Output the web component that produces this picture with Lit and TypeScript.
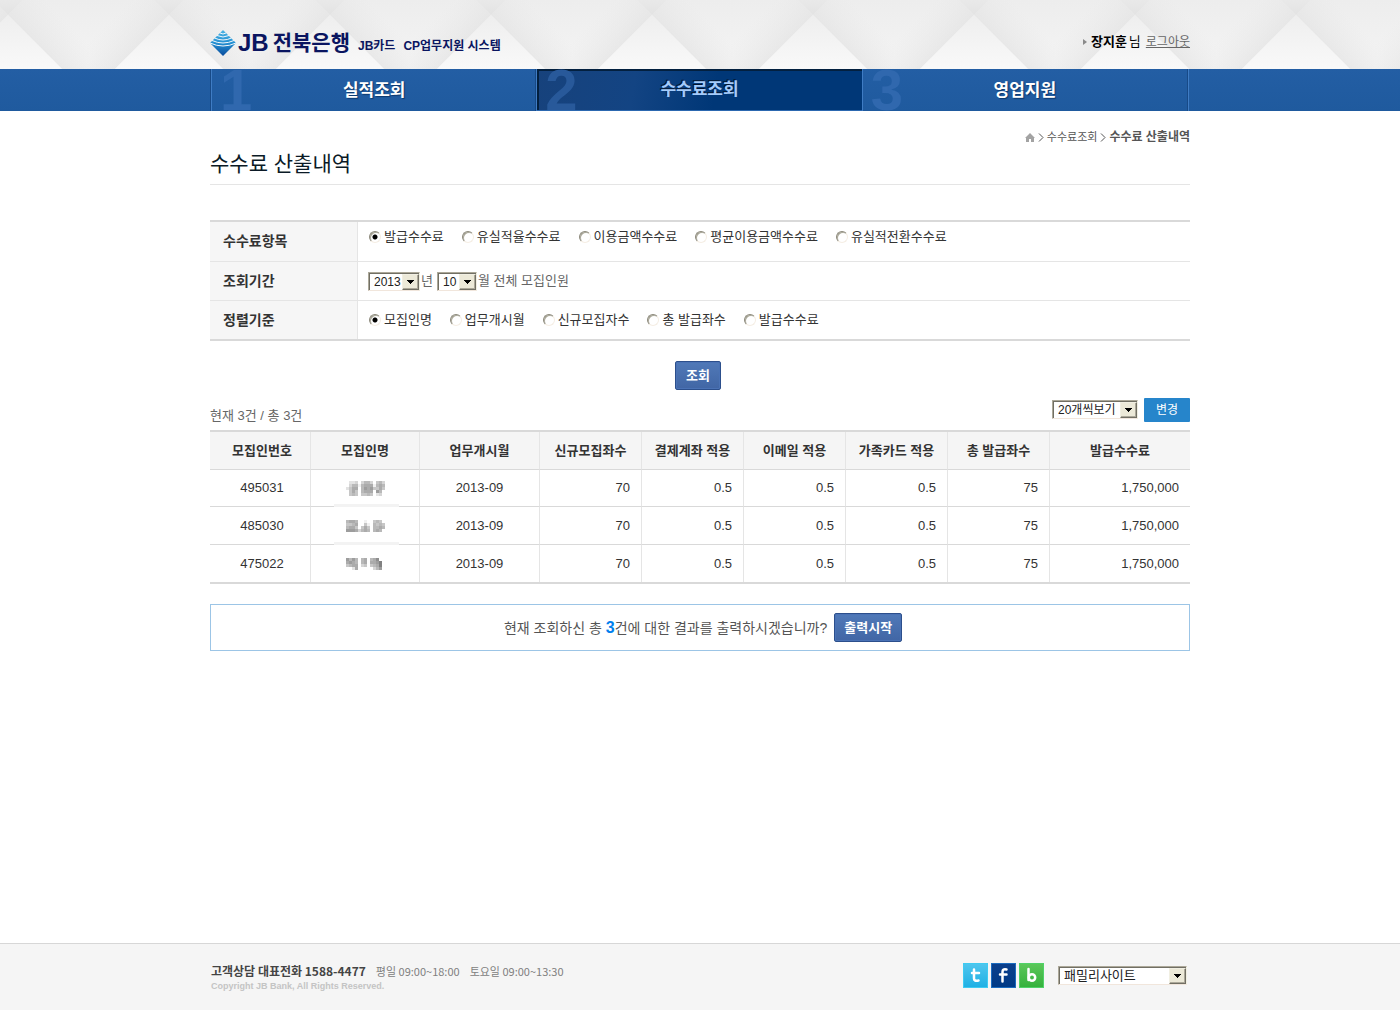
import { LitElement, html, css, svg } from "lit";
import { customElement, property, state } from "lit/decorators.js";
import { classMap } from "lit/directives/class-map.js";

const FONT = css`"Liberation Sans", "Noto Sans CJK KR", sans-serif`;

/** Drop-down with a sunken frame and a raised arrow button. */
@customElement("bevel-select")
class BevelSelect extends LitElement {
  @property() label = "";
  @property({ type: Array }) options: string[] = [];

  static styles = css`
    :host {
      display: inline-grid;
      grid-template: 1fr / 1fr;
      box-sizing: border-box;
      height: 19px;
      background: #fff;
      border: 1px solid #aca899;
      border-right-color: #f1efe2;
      border-bottom-color: #f1e6dc;
      box-shadow: inset 1px 1px 0 #716f64;
      font-size: 12px;
    }
    select {
      grid-area: 1 / 1;
      width: 100%;
      appearance: none;
      border: 0;
      border-radius: 0;
      margin: 0;
      padding: 1px 18px 0 5px;
      background: none;
      color: #222;
      font-family: ${FONT};
      font-size: inherit;
      line-height: 16px;
    }
    .arrow {
      grid-area: 1 / 1;
      justify-self: end;
      display: grid;
      place-items: center;
      width: 17px;
      box-sizing: border-box;
      margin-top: 1px;
      background: #ece9d8;
      border: 1px solid #f1efe2;
      border-right-color: #716f64;
      border-bottom-color: #716f64;
      box-shadow: inset -1px -1px 0 #aca899;
      pointer-events: none;
    }
  `;

  render() {
    return html`
      <select aria-label=${this.label}>
        ${this.options.map((o) => html`<option>${o}</option>`)}
      </select>
      <span class="arrow" aria-hidden="true">
        <svg width="7" height="4" viewBox="0 0 7 4" shape-rendering="crispEdges"><path d="M0 0h7v1H0zM1 1h5v1H1zM2 2h3v1H2zM3 3h1v1H3z" fill="#000" /></svg>
      </span>
    `;
  }
}

/** Bank header with logo, user line and main navigation. */
@customElement("site-header")
class SiteHeader extends LitElement {
  @state() private active = 1;
  private tabs = ["실적조회", "수수료조회", "영업지원"];

  static styles = css`
    :host {
      display: block;
      font-family: ${FONT};
    }
    .top {
      display: grid;
      height: 69px;
      overflow: hidden;
    }
    .pattern {
      grid-area: 1 / 1;
      width: 100%;
      height: 69px;
    }
    .bar {
      grid-area: 1 / 1;
      box-sizing: border-box;
      width: 100%;
      max-width: 980px;
      margin: 0 auto;
      padding-top: 28px;
      display: flex;
      justify-content: space-between;
      align-items: flex-start;
      position: relative;
    }
    .logo {
      display: flex;
      align-items: center;
      color: #0a1560;
      text-decoration: none;
      font-weight: bold;
      line-height: 30px;
      white-space: nowrap;
    }
    .jb {
      font-size: 24px;
      margin: 0 4px 0 2px;
    }
    .bank {
      font-size: 21px;
    }
    .system {
      font-size: 12px;
      line-height: 36px;
      height: 30px;
      margin-left: 8px;
      display: flex;
      gap: 8px;
    }
    .user {
      display: flex;
      align-items: center;
      line-height: 28px;
      font-size: 13px;
      color: #000;
    }
    .user svg {
      margin-right: 4px;
    }
    .user b {
      margin-right: 2px;
    }
    .user a {
      font-size: 12px;
      color: #666;
      margin-left: 5px;
    }
    nav {
      background: linear-gradient(#235ea4, #1f5a9e);
      height: 42px;
    }
    .tabs {
      box-sizing: border-box;
      width: 100%;
      max-width: 980px;
      margin: 0 auto;
      padding: 0 2px 0 1px;
      height: 42px;
      display: flex;
      list-style: none;
    }
    .tabs li {
      flex: 1;
      display: flex;
      border-left: 1px solid #3f7cc4;
      box-shadow: -1px 0 0 #184a87;
    }
    .tabs li:last-child {
      border-right: 1px solid #184a87;
      box-shadow: 1px 0 0 #3f7cc4, -1px 0 0 #184a87;
    }
    .tab {
      flex: 1;
      position: relative;
      text-align: center;
      text-decoration: none;
      color: #fff;
      font-size: 17px;
      font-weight: bold;
      line-height: 43px;
      text-shadow: 1px 1px 1px #0c376c;
    }
    .tab.on {
      line-height: 42px;
      background: linear-gradient(100deg, #17427c 0%, #134483 30%, #003777 55%, #003777 100%);
      border-bottom: 1px solid #2c68b0;
      box-shadow: inset 2px 2px 0 #03203f;
      color: #a3cbfb;
      text-shadow: -1px -1px 0 #04152e;
    }
    .digit {
      position: absolute;
      left: 8px;
      top: 0;
      font-size: 58px;
      line-height: 42px;
      color: #3068ae;
      text-shadow: none;
    }
    .on .digit {
      color: #28599a;
    }
  `;

  private pattern() {
    return html`
      <svg class="pattern" aria-hidden="true">
        <defs>
          <linearGradient id="base" x1="0" y1="0" x2="0" y2="1">
            <stop offset="0" stop-color="#ededed" />
            <stop offset="1" stop-color="#f4f4f4" />
          </linearGradient>
          <linearGradient id="wedge" x1="0" y1="0" x2="0" y2="1">
            <stop offset="0" stop-color="#e9e9e9" />
            <stop offset="1" stop-color="#e3e3e3" />
          </linearGradient>
          <linearGradient id="peak" x1="0" y1="0" x2="0" y2="1">
            <stop offset="0" stop-color="#eeeeee" />
            <stop offset="1" stop-color="#f9f9f9" />
          </linearGradient>
          <linearGradient id="fadeR" gradientUnits="userSpaceOnUse" x1="108" y1="42" x2="134" y2="16">
            <stop offset="0" stop-color="#e0e0e0" stop-opacity="0.55" />
            <stop offset="1" stop-color="#e6e6e6" stop-opacity="0" />
          </linearGradient>
          <linearGradient id="fadeL" gradientUnits="userSpaceOnUse" x1="54" y1="42" x2="28" y2="16">
            <stop offset="0" stop-color="#e0e0e0" stop-opacity="0.55" />
            <stop offset="1" stop-color="#e6e6e6" stop-opacity="0" />
          </linearGradient>
          <pattern id="quilt" width="161" height="69" patternUnits="userSpaceOnUse" x="88">
            <rect width="161" height="69" fill="url(#base)" />
            <path d="M81 15 135 69H161V0H96Z" fill="url(#fadeR)" />
            <path d="M81 15 27 69H0V0H66Z" fill="url(#fadeL)" />
            <path d="M66 0H96L81 15Z" fill="url(#wedge)" />
            <path d="M81 15 135 69H27Z" fill="url(#peak)" />
          </pattern>
        </defs>
        <rect width="100%" height="69" fill="url(#quilt)" />
      </svg>
    `;
  }

  private mark() {
    return html`
      <svg width="26" height="26" viewBox="0 0 26 26" aria-hidden="true">
        <defs>
          <linearGradient id="gem" x1="0" y1="0" x2="0" y2="1">
            <stop offset="0" stop-color="#4db4e4" />
            <stop offset="0.5" stop-color="#2490d2" />
            <stop offset="1" stop-color="#0a4b9c" />
          </linearGradient>
        </defs>
        <path d="M13 0 26 13 13 26 0 13Z" fill="url(#gem)" />
        <g fill="none" stroke="#f4f8fb" stroke-width="1">
          <path d="M10 3Q13 5 16 3" />
          <path d="M7 5.500Q13 8.500 19 5.500" />
          <path d="M4.500 8Q13 12 21.500 8" />
          <path d="M2 10.500Q13 15.500 24 10.500" />
          <path d="M0 13Q13 19 26 13" />
        </g>
      </svg>
    `;
  }

  private pick(e: Event, i: number) {
    e.preventDefault();
    this.active = i;
  }

  render() {
    return html`
      <div class="top">
        ${this.pattern()}
        <div class="bar">
          <a class="logo" href="#">
            ${this.mark()}
            <span class="jb">JB</span><span class="bank">전북은행</span>
            <span class="system"><span>JB카드</span><span>CP업무지원 시스템</span></span>
          </a>
          <div class="user">
            <svg width="4" height="6" viewBox="0 0 4 6" aria-hidden="true"><path d="M0 0 4 3 0 6Z" fill="#8a8a8a" /></svg>
            <b>장지훈</b>님<a href="#">로그아웃</a>
          </div>
        </div>
      </div>
      <nav aria-label="주 메뉴">
        <ul class="tabs">
          ${this.tabs.map(
            (t, i) => html`<li>
              <a href="#" class=${classMap({ tab: true, on: i === this.active })} @click=${(e: Event) => this.pick(e, i)}>
                <span class="digit" aria-hidden="true">${i + 1}</span>${t}
              </a>
            </li>`
          )}
        </ul>
      </nav>
    `;
  }
}

/** Search conditions: fee item, period and sort order. */
@customElement("fee-filter")
class FeeFilter extends LitElement {
  private items = ["발급수수료", "유실적율수수료", "이용금액수수료", "평균이용금액수수료", "유실적전환수수료"];
  private sorts = ["모집인명", "업무개시월", "신규모집자수", "총 발급좌수", "발급수수료"];

  static styles = css`
    :host {
      display: block;
      font: 13px/16px ${FONT};
      color: #333;
    }
    .box {
      border: solid #d9d9d9;
      border-width: 2px 0;
    }
    .row {
      display: grid;
      grid-template-columns: 148px 1fr;
      min-height: 39px;
      box-sizing: border-box;
      border-bottom: 1px solid #e5e5e5;
    }
    .row:first-child {
      min-height: 40px;
    }
    .row:last-child {
      min-height: 38px;
      border-bottom: 0;
    }
    .head {
      display: flex;
      align-items: center;
      padding: 0 0 1px 13px;
      background: #f6f6f6;
      border-right: 1px solid #e5e5e5;
      font-weight: bold;
      font-size: 14px;
    }
    .cell {
      display: flex;
      flex-wrap: wrap;
      align-items: center;
      padding-left: 11px;
      gap: 0 18px;
    }
    .cell.high {
      align-items: flex-start;
      padding-top: 7px;
    }
    .cell.period {
      gap: 0 1px;
      padding-left: 10px;
      color: #666;
    }
    .cell.period .unit {
      margin-right: 3px;
    }
    .year {
      width: 52px;
    }
    .month {
      width: 40px;
    }
    label {
      display: flex;
      align-items: center;
      gap: 3px;
      white-space: nowrap;
    }
    input {
      appearance: none;
      box-sizing: border-box;
      width: 12px;
      height: 12px;
      margin: 0;
      border-radius: 50%;
      border: 1px solid #8b887a;
      border-right-color: #f5eee4;
      border-bottom-color: #f5eee4;
      background: #fff;
      box-shadow: inset 1px 1px 0 #aaa899;
    }
    input:checked {
      background: radial-gradient(circle, #000 2px, #fff 3px);
    }
    .actions {
      display: flex;
      justify-content: center;
      padding: 20px 4px 0 0;
    }
    button {
      height: 29px;
      padding: 0 10px;
      border: 1px solid #2c4f8c;
      border-radius: 2px;
      background: linear-gradient(#5079b8, #4166a5);
      color: #fff;
      font: bold 13px/27px ${FONT};
      box-shadow: inset 0 0 0 1px #4a72b5;
    }
  `;

  private radios(name: string, list: string[]) {
    return list.map(
      (t, i) => html`<label><input type="radio" name=${name} ?checked=${i === 0} />${t}</label>`
    );
  }

  render() {
    return html`
      <form @submit=${(e: Event) => e.preventDefault()}>
        <div class="box">
          <div class="row" role="radiogroup" aria-labelledby="h-item">
            <div class="head" id="h-item">수수료항목</div>
            <div class="cell high">${this.radios("item", this.items)}</div>
          </div>
          <div class="row" role="group" aria-labelledby="h-period">
            <div class="head" id="h-period">조회기간</div>
            <div class="cell period">
              <bevel-select class="year" label="년" .options=${["2013", "2012", "2011"]}></bevel-select>
              <span class="unit">년</span>
              <bevel-select class="month" label="월" .options=${["10", "11", "12"]}></bevel-select>
              <span>월 전체 모집인원</span>
            </div>
          </div>
          <div class="row" role="radiogroup" aria-labelledby="h-sort">
            <div class="head" id="h-sort">정렬기준</div>
            <div class="cell">${this.radios("sort", this.sorts)}</div>
          </div>
        </div>
        <div class="actions"><button type="submit">조회</button></div>
      </form>
    `;
  }
}

interface FeeRow {
  id: string;
  mask: string[];
  month: string;
  cells: string[];
  fee: string;
}

/** Fee result list with its toolbar and the print prompt. */
@customElement("fee-results")
class FeeResults extends LitElement {
  private heads = ["모집인번호", "모집인명", "업무개시월", "신규모집좌수", "결제계좌 적용", "이메일 적용", "가족카드 적용", "총 발급좌수", "발급수수료"];
  // Each mask is a grid of grey levels that stands for a hidden name.
  private rows: FeeRow[] = [
    {
      id: "495031",
      mask: ["0223035530453", "0355156661565", "2466057674464", "0464056660750", "0454044540230"],
      month: "2013-09",
      cells: ["70", "0.5", "0.5", "0.5", "75"],
      fee: "1,750,000",
    },
    {
      id: "485030",
      mask: ["5665001004540", "4456004105454", "5664046405565", "7776356505650"],
      month: "2013-09",
      cells: ["70", "0.5", "0.5", "0.5", "75"],
      fee: "1,750,000",
    },
    {
      id: "475022",
      mask: ["7575056056800", "6765056066790", "4566034045690", "0026000003570"],
      month: "2013-09",
      cells: ["70", "0.5", "0.5", "0.5", "75"],
      fee: "1,750,000",
    },
  ];

  static styles = css`
    :host {
      display: block;
      font: 13px/16px ${FONT};
      color: #333;
    }
    .tools {
      display: flex;
      align-items: flex-start;
      gap: 6px;
      height: 32px;
      margin-top: 8px;
    }
    .count {
      flex: 1;
      align-self: flex-end;
      line-height: 28px;
      color: #666;
    }
    .size {
      width: 86px;
      margin-top: 2px;
    }
    .change {
      height: 24px;
      width: 46px;
      padding: 0;
      border: 0;
      border-radius: 1px;
      background: #2685cb;
      color: #fff;
      font: 12px/22px ${FONT};
    }
    table {
      width: 100%;
      table-layout: fixed;
      border-spacing: 0;
      border: solid #d9d9d9;
      border-width: 2px 0;
    }
    .c1 { width: 100px; }
    .c2 { width: 109px; }
    .c3 { width: 120px; }
    .cn { width: 102px; }
    th,
    td {
      box-sizing: border-box;
      height: 38px;
      padding: 0 11px 0 0;
      border-left: 1px solid #e5e5e5;
      border-bottom: 1px solid #d9d9d9;
      text-align: right;
      white-space: nowrap;
    }
    th {
      padding: 0;
      text-align: center;
      background: #f5f5f5;
    }
    th:first-child,
    td:first-child {
      border-left: 0;
    }
    .mid {
      padding: 0;
      text-align: center;
    }
    th:first-child,
    td:first-child {
      padding-left: 4px;
    }
    tbody tr:first-child td {
      height: 37px;
    }
    tbody tr:last-child td {
      height: 37px;
      border-bottom: 0;
    }
    .name {
      position: relative;
    }
    .name svg {
      display: block;
      margin: 0 auto;
    }
    tr:not(:last-child) .name::after {
      content: "";
      position: absolute;
      left: 23px;
      bottom: -1px;
      width: 65px;
      height: 3px;
      background: #f3f3f3;
    }
    .prompt {
      display: flex;
      justify-content: center;
      align-items: center;
      gap: 7px;
      margin-top: 20px;
      padding: 8px 0 8px 6px;
      border: 1px solid #9cc5e6;
      color: #555;
    }
    .prompt p {
      margin: 0;
      font-size: 14px;
    }
    .prompt strong {
      font-size: 16px;
      color: #0080ee;
    }
    .print {
      height: 29px;
      padding: 0 9px;
      border: 1px solid #2c4f8c;
      border-radius: 2px;
      background: linear-gradient(#5079b8, #4166a5);
      color: #fff;
      font: bold 13px/27px ${FONT};
      box-shadow: inset 0 0 0 1px #4a72b5;
    }
  `;

  private mosaic(mask: string[]) {
    const h = mask.length * 3;
    return html`<svg width="39" height=${h} viewBox="0 0 39 ${h}" role="img" aria-label="비공개" shape-rendering="crispEdges">
      ${mask.flatMap((line, y) =>
        [...line].map((c, x) => {
          const g = 255 - Number(c) * 14;
          return c === "0" ? null : svg`<rect x=${x * 3} y=${y * 3} width="3" height="3" fill="rgb(${g},${g},${g})"></rect>`;
        })
      )}
    </svg>`;
  }

  render() {
    return html`
      <div class="tools">
        <span class="count">현재 3건 / 총 3건</span>
        <bevel-select class="size" label="목록 수" .options=${["20개씩보기", "50개씩보기"]}></bevel-select>
        <button class="change" type="button">변경</button>
      </div>
      <table>
        <colgroup>
          <col class="c1" /><col class="c2" /><col class="c3" />
          <col class="cn" /><col class="cn" /><col class="cn" /><col class="cn" /><col class="cn" />
          <col />
        </colgroup>
        <thead>
          <tr>${this.heads.map((t) => html`<th scope="col">${t}</th>`)}</tr>
        </thead>
        <tbody>
          ${this.rows.map(
            (r) => html`<tr>
              <td class="mid">${r.id}</td>
              <td class="mid name">${this.mosaic(r.mask)}</td>
              <td class="mid">${r.month}</td>
              ${r.cells.map((c) => html`<td>${c}</td>`)}
              <td>${r.fee}</td>
            </tr>`
          )}
        </tbody>
      </table>
      <div class="prompt">
        <p>현재 조회하신 총 <strong>3</strong>건에 대한 결과를 출력하시겠습니까?</p>
        <button class="print" type="button">출력시작</button>
      </div>
    `;
  }
}

/** Footer with contact details, social links and family sites. */
@customElement("site-footer")
class SiteFooter extends LitElement {
  static styles = css`
    :host {
      display: block;
      border-top: 1px solid #d7d7d7;
      background: #f5f5f5;
      font-family: ${FONT};
    }
    .inner {
      box-sizing: border-box;
      max-width: 980px;
      height: 66px;
      margin: 0 auto;
      padding: 19px 3px 0 1px;
      display: flex;
      justify-content: space-between;
      align-items: flex-start;
    }
    .phone {
      display: flex;
      gap: 10px;
      margin: 0;
      font-family: "Noto Sans CJK KR", sans-serif;
      font-size: 11px;
      line-height: 16px;
      color: #808080;
    }
    .phone strong {
      font-size: 12px;
      color: #444;
    }
    .copy {
      margin: 0;
      font-size: 9px;
      line-height: 14px;
      font-weight: bold;
      color: #c4c4c4;
    }
    .links {
      display: flex;
      gap: 3px;
    }
    .links a {
      display: block;
      height: 25px;
    }
    .links bevel-select {
      width: 129px;
      margin: 3px 0 0 11px;
      font-size: 13px;
    }
  `;

  render() {
    return html`
      <div class="inner">
        <div>
          <p class="phone"><strong>고객상담 대표전화 1588-4477</strong><span>평일 09:00~18:00</span><span>토요일 09:00~13:30</span></p>
          <p class="copy">Copyright JB Bank, All Rights Reserved.</p>
        </div>
        <div class="links">
          <a href="#" aria-label="트위터">
            <svg width="25" height="25" viewBox="0 0 25 25">
              <defs><linearGradient id="tw" x1="0" y1="0" x2="0" y2="1"><stop offset="0" stop-color="#4fc6ee" /><stop offset="1" stop-color="#1fb0e4" /></linearGradient></defs>
              <rect x="0.500" y="0.500" width="24" height="24" fill="url(#tw)" stroke="#3ecbf2" />
              <path d="M11 6.500V15.500Q11 18.500 15.500 17.500M9 10H16" fill="none" stroke="#fff" stroke-width="2.500" stroke-linecap="round" stroke-linejoin="round" />
            </svg>
          </a>
          <a href="#" aria-label="페이스북">
            <svg width="25" height="25" viewBox="0 0 25 25">
              <defs><linearGradient id="fb" x1="0" y1="0" x2="0" y2="1"><stop offset="0" stop-color="#0b3f8c" /><stop offset="1" stop-color="#003a86" /></linearGradient></defs>
              <rect x="0.500" y="0.500" width="24" height="24" fill="url(#fb)" stroke="#1a6bc0" />
              <path d="M11.500 18.500V9Q11.500 5.500 15.500 6.500M9 11.500H15.500" fill="none" stroke="#fff" stroke-width="2.500" stroke-linecap="round" stroke-linejoin="round" />
            </svg>
          </a>
          <a href="#" aria-label="블로그">
            <svg width="25" height="25" viewBox="0 0 25 25">
              <defs><linearGradient id="bl" x1="0" y1="0" x2="0" y2="1"><stop offset="0" stop-color="#5cc75a" /><stop offset="1" stop-color="#34b13c" /></linearGradient></defs>
              <rect x="0.500" y="0.500" width="24" height="24" fill="url(#bl)" stroke="#4fd268" />
              <path d="M9.500 6V17" fill="none" stroke="#fff" stroke-width="2.500" stroke-linecap="round" />
              <circle cx="13" cy="14.500" r="3.200" fill="none" stroke="#fff" stroke-width="2.500" />
            </svg>
          </a>
          <bevel-select label="패밀리사이트" .options=${["패밀리사이트"]}></bevel-select>
        </div>
      </div>
    `;
  }
}

@customElement("app-root")
class AppRoot extends LitElement {
  static styles = css`
    :host {
      display: flex;
      flex-direction: column;
      min-height: 100vh;
      background: #fff;
      font: 13px/16px ${FONT};
    }
    main {
      flex: 1;
      box-sizing: border-box;
      width: 100%;
      max-width: 980px;
      margin: 0 auto;
      padding: 18px 0 40px;
    }
    .crumbs {
      display: flex;
      justify-content: flex-end;
      align-items: center;
      gap: 3px;
      color: #555;
      font-size: 12px;
    }
    .crumbs a {
      color: inherit;
      text-decoration: none;
      font-size: 11px;
    }
    .crumbs .home {
      display: flex;
    }
    h1 {
      margin: 4px 0 35px;
      padding-bottom: 5px;
      border-bottom: 1px solid #e5e5e5;
      color: #0b1a26;
      font-size: 21px;
      line-height: 30px;
      font-weight: normal;
    }
  `;

  private chevron() {
    return html`<svg width="6" height="9" viewBox="0 0 6 9" aria-hidden="true"><path d="M1 0.500 5 4.500 1 8.500" fill="none" stroke="#555" /></svg>`;
  }

  render() {
    return html`
      <site-header></site-header>
      <main>
        <div class="crumbs">
          <a class="home" href="#" aria-label="홈">
            <svg width="10" height="9" viewBox="0 0 10 9"><path d="M5 0 10 5H9V9H6V6H4V9H1V5H0Z" fill="#a3a3a3" /></svg>
          </a>
          ${this.chevron()}<a href="#">수수료조회</a>${this.chevron()}<b>수수료 산출내역</b>
        </div>
        <h1>수수료 산출내역</h1>
        <fee-filter></fee-filter>
        <fee-results></fee-results>
      </main>
      <site-footer></site-footer>
    `;
  }
}
